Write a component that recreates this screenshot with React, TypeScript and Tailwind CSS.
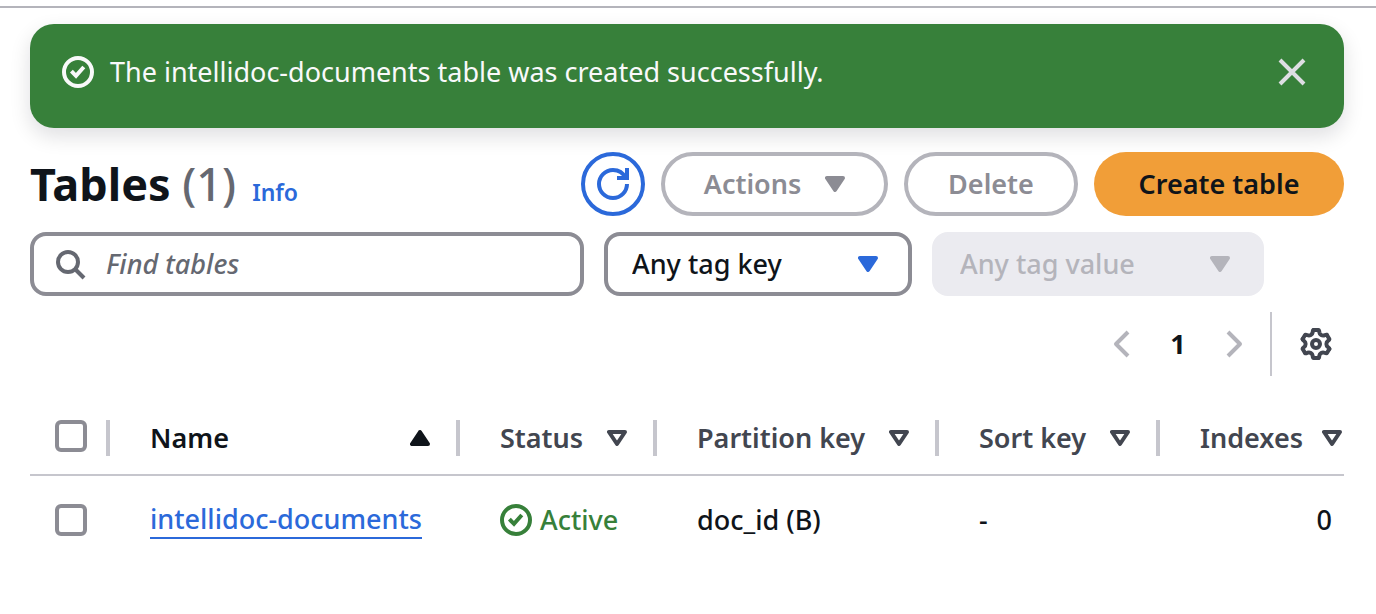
import type { ReactNode } from "react";

type IconProps = { children: ReactNode; className?: string };

function Icon({ children, className = "" }: IconProps) {
  return (
    <svg
      viewBox="0 0 16 16"
      className={`size-8 shrink-0 ${className}`}
      fill="none"
      stroke="currentColor"
      strokeWidth="2"
      aria-hidden="true"
    >
      {children}
    </svg>
  );
}

function Caret({ kind, className = "" }: { kind: "filled" | "outline" | "up"; className?: string }) {
  return (
    <svg
      viewBox="3 0 10 16"
      className={`h-8 w-5 shrink-0 ${className}`}
      fill={kind === "outline" ? "none" : "currentColor"}
      stroke="currentColor"
      strokeWidth="2"
      strokeLinejoin="round"
      aria-hidden="true"
    >
      <path d={kind === "up" ? "M4 11h8L8 5z" : "M4 5h8l-4 6z"} />
    </svg>
  );
}

function SuccessIcon() {
  return (
    <Icon>
      <circle cx="8" cy="8" r="7" />
      <path d="m4.700 7.600 2.300 2.300 3.900-4.400" />
    </Icon>
  );
}

function GearIcon() {
  return (
    <Icon>
      <circle cx="8" cy="8" r="2" />
      {[0, 60, 120, 180, 240, 300].map((angle) => (
        <path
          key={angle}
          transform={`rotate(${angle} 8 8)`}
          strokeLinecap="round"
          d="M6.800 1h2.400Q9.600 1 9.700 2.200Q9.800 3.000 10.600 3.500Q11.400 3.960 12.200 3.640Q13.260 3.120 13.460 3.460"
        />
      ))}
    </Icon>
  );
}

function Checkbox({ label }: { label: string }) {
  return (
    <input
      type="checkbox"
      aria-label={label}
      className="block size-8 appearance-none rounded-md border-4 border-[#8c8c94] bg-white checked:bg-[#006ce0]"
    />
  );
}

function HeaderCell({
  label,
  sorted = false,
  last = false,
}: {
  label: string;
  sorted?: boolean;
  last?: boolean;
}) {
  return (
    <th
      scope="col"
      className="border-b-2 border-[#c6c6cd] p-0 pt-0.5 font-semibold"
      aria-sort={sorted ? "ascending" : undefined}
    >
      <div
        className={`flex h-9 items-center border-[#c6c6cd] pl-10 ${last ? "pr-0.5" : "border-r-4 pr-[26px]"} ${sorted ? "text-[#0f141a]" : "text-[#424650]"}`}
      >
        <button type="button" className="flex flex-1 items-center justify-between whitespace-nowrap">
          {label}
          <Caret kind={sorted ? "up" : "outline"} />
        </button>
      </div>
    </th>
  );
}

export default function App() {
  return (
    <div className="mt-1.5 border-t-2 border-[#b4b4bb] bg-white pt-4 pr-8 pb-12 pl-[30px] font-['Noto_Sans','Open_Sans',sans-serif] text-[27px] leading-9 font-medium text-[#0f141a]">
      <div
        role="status"
        className="flex h-26 items-start gap-4 rounded-3xl bg-[#37803a] px-8 pt-8 font-normal text-[#f9f9fa] shadow-[0_8px_20px_1px_rgba(0,7,22,0.12)]"
      >
        <SuccessIcon />
        <p className="flex-1 leading-8">The intellidoc-documents table was created successfully.</p>
        <button type="button" aria-label="Dismiss" className="mr-1 text-[#dedee3]">
          <Icon>
            <path d="m2 2 12 12M14 2 2 14" />
          </Icon>
        </button>
      </div>

      <header className="mt-6 flex items-center justify-between">
        <div className="flex items-baseline gap-4">
          <h1 className="text-[45px] leading-16 font-bold">
            Tables <span className="font-medium text-[#656871]">(1)</span>
          </h1>
          <a href="#info" className="text-[23px] font-semibold text-[#2b69da]">
            Info
          </a>
        </div>
        <div className="flex gap-4 font-semibold">
          <button
            type="button"
            aria-label="Refresh"
            className="flex size-16 items-center justify-center rounded-full border-4 border-[#2b69da] text-[#2b69da]"
          >
            <Icon>
              <path d="M15 8a7 7 0 0 1-7 7 7 7 0 0 1-7-7 7 7 0 0 1 7-7 7 7 0 0 1 6.300 4" />
              <path d="M10 5h5V0" />
            </Icon>
          </button>
          <button
            type="button"
            disabled
            className="flex h-16 w-[227px] items-center justify-center gap-6 rounded-full border-4 border-[#b4b4bb] text-[#8c8c94]"
          >
            Actions
            <Caret kind="filled" />
          </button>
          <button
            type="button"
            disabled
            className="h-16 w-[174px] rounded-full border-4 border-[#b4b4bb] text-[#8c8c94]"
          >
            Delete
          </button>
          <button type="button" className="h-16 w-[250px] rounded-full bg-[#f19e38]">
            Create table
          </button>
        </div>
      </header>

      <div className="mt-4 flex gap-5 pr-20">
        <label className="flex h-16 min-w-0 flex-1 items-center gap-5 rounded-2xl border-4 border-[#8c8c94] px-5 text-[#656871]">
          <Icon>
            <circle cx="7" cy="7" r="5" />
            <path d="m11 11 4 4" />
          </Icon>
          <input
            type="search"
            aria-label="Find tables"
            placeholder="Find tables"
            className="min-w-0 flex-1 bg-transparent outline-none placeholder:text-[#656871] placeholder:italic"
          />
        </label>
        <div className="relative w-[308px]">
          <select
            aria-label="Tag key"
            className="h-16 w-full appearance-none rounded-2xl border-4 border-[#8c8c94] pr-16 pl-6"
          >
            <option>Any tag key</option>
          </select>
          <Caret kind="filled" className="pointer-events-none absolute top-4 right-[34px] text-[#2b69da]" />
        </div>
        <div className="relative w-[332px] text-[#b4b4bb]">
          <select
            aria-label="Tag value"
            disabled
            className="h-16 w-full appearance-none rounded-2xl border-4 border-[#ebebf0] bg-[#ebebf0] pr-16 pl-6 opacity-100"
          >
            <option>Any tag value</option>
          </select>
          <Caret kind="filled" className="pointer-events-none absolute top-4 right-[34px]" />
        </div>
      </div>

      <div className="mt-4 flex h-16 items-center justify-end pr-3">
        <nav aria-label="Pagination" className="flex items-center text-[#b4b4bb]">
          <button type="button" disabled aria-label="Previous page">
            <Icon>
              <path d="M11 2 5 8l6 6" strokeLinejoin="round" />
            </Icon>
          </button>
          <button type="button" aria-current="page" className="w-20 text-center font-bold text-[#0f141a]">
            1
          </button>
          <button type="button" disabled aria-label="Next page">
            <Icon>
              <path d="m5 2 6 6-6 6" strokeLinejoin="round" />
            </Icon>
          </button>
        </nav>
        <div className="mr-7 ml-5 h-16 w-0.5 bg-[#c6c6cd]" />
        <button type="button" aria-label="Preferences" className="text-[#424650]">
          <GearIcon />
        </button>
      </div>

      <table className="mt-6 w-full table-fixed border-separate border-spacing-0 text-left">
        <colgroup>
          <col className="w-20" />
          <col className="w-[350px]" />
          <col className="w-[197px]" />
          <col className="w-[282px]" />
          <col className="w-[221px]" />
          <col />
        </colgroup>
        <thead>
          <tr className="h-19">
            <th scope="col" className="border-b-2 border-[#c6c6cd] p-0 pt-0.5">
              <div className="flex h-9 items-start border-r-4 border-[#c6c6cd] pl-[25px]">
                <Checkbox label="Select all tables" />
              </div>
            </th>
            <HeaderCell label="Name" sorted />
            <HeaderCell label="Status" />
            <HeaderCell label="Partition key" />
            <HeaderCell label="Sort key" />
            <HeaderCell label="Indexes" last />
          </tr>
        </thead>
        <tbody>
          <tr className="h-22">
            <td className="pl-[25px]">
              <Checkbox label="Select intellidoc-documents" />
            </td>
            <td className="pl-10">
              <a href="#intellidoc-documents" className="inline-block border-b-2 border-[#2b69da] text-[#2b69da]">
                intellidoc-documents
              </a>
            </td>
            <td className="pl-10 text-[#37803a]">
              <span className="flex items-center gap-2">
                <SuccessIcon />
                Active
              </span>
            </td>
            <td className="pl-10">doc_id (B)</td>
            <td className="pl-10">-</td>
            <td className="pr-3 text-right">0</td>
          </tr>
        </tbody>
      </table>
    </div>
  );
}
